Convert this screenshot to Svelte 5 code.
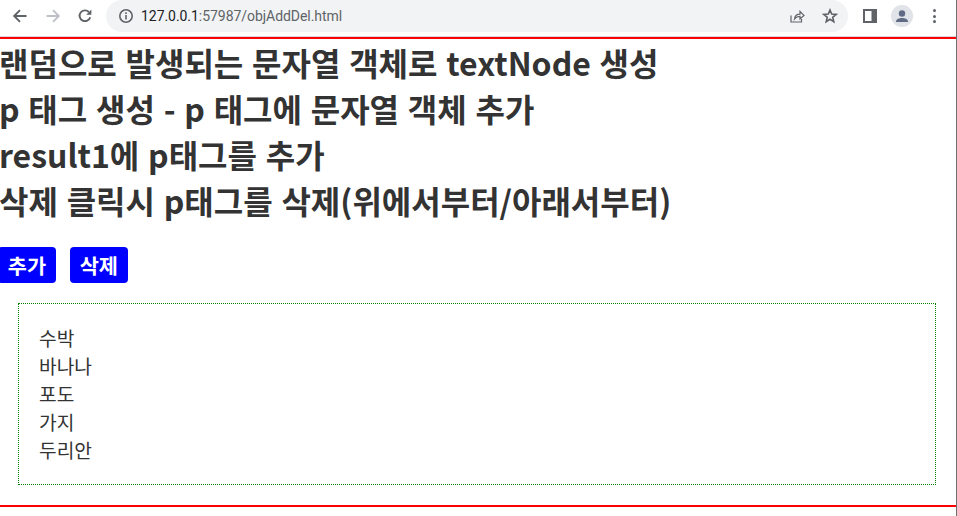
<script>
  const headings = [
    "랜덤으로 발생되는 문자열 객체로 textNode 생성",
    "p 태그 생성 - p 태그에 문자열 객체 추가",
    "result1에 p태그를 추가",
    "삭제 클릭시 p태그를 삭제(위에서부터/아래서부터)",
  ];
  const fruits = ["수박", "바나나", "포도", "가지", "두리안"];
</script>

<div class="window">
  <header class="toolbar">
    <svg class="nav first" viewBox="0 0 16 16" width="16" height="16">
      <path d="M14.5 8H2.5M8 2.2 2.2 8 8 13.8" fill="none" stroke="#5f6368" stroke-width="1.9" />
    </svg>
    <svg class="nav tight" viewBox="0 0 16 16" width="16" height="16">
      <path d="M1.5 8h12M8 2.2 13.8 8 8 13.8" fill="none" stroke="#bdc1c6" stroke-width="1.9" />
    </svg>
    <svg class="nav" viewBox="0 0 16 16" width="16" height="16">
      <path d="M13.2 9.2A5.4 5.4 0 1 1 11.9 4" fill="none" stroke="#5f6368" stroke-width="1.9" />
      <path d="M14.4 1.6v5.2H9.2z" fill="#5f6368" />
    </svg>

    <div class="omnibox">
      <svg viewBox="0 0 16 16" width="16" height="16" class="info">
        <circle cx="8" cy="8" r="6.2" fill="none" stroke="#5f6368" stroke-width="1.6" />
        <path d="M7.2 7h1.6v4.6H7.2zM7.2 4.3h1.6v1.6H7.2z" fill="#5f6368" />
      </svg>
      <span class="url"><span class="host">127.0.0.1</span>:57987/objAddDel.html</span>
      <span class="spacer"></span>
      <svg viewBox="0 0 16 16" width="16" height="16" class="share">
        <path d="M2 7.5V14h10.5V11M5.5 11c.4-3 2.500-4.800 5.500-4.800V3.500L15 7.400l-4 3.600V8.400c-2.200 0-4 .6-5.500 2.600z" fill="none" stroke="#5f6368" stroke-width="1.200" />
      </svg>
      <svg viewBox="0 0 16 16" width="16" height="16" class="star">
        <path d="M8 2l1.700 4.100 4.500.3-3.500 2.900 1.100 4.400L8 11.300l-3.800 2.400 1.100-4.400-3.500-2.900 4.500-.3z" fill="none" stroke="#5f6368" stroke-width="1.600" />
      </svg>
    </div>

    <svg class="panel" viewBox="0 0 14 14" width="14" height="14">
      <path fill-rule="evenodd" d="M0 0h14v14H0zM2 2v10h6.500V2z" fill="#5f6368" />
    </svg>
    <span class="avatar">
      <svg viewBox="0 0 22 22" width="22" height="22">
        <circle cx="11" cy="8.500" r="3.200" fill="#5f6b85" />
        <path d="M5 16.500c0-2.500 3.500-3.600 6-3.600s6 1.100 6 3.600v.5H5z" fill="#5f6b85" />
      </svg>
    </span>
    <span class="dots"><i></i><i></i><i></i></span>
  </header>

  <main class="page">
    {#each headings as line}
      <h1>{line}</h1>
    {/each}

    <div class="buttons">
      <button type="button" class="add">추가</button>
      <button type="button">삭제</button>
    </div>

    <div class="result">
      {#each fruits as fruit}
        <p>{fruit}</p>
      {/each}
    </div>
  </main>
</div>

<style>
  :global(body) {
    margin: 0;
    background: #fff;
  }

  .window {
    width: 957px;
    height: 516px;
    overflow: hidden;
    box-sizing: border-box;
    border-right: 1px solid #6e6e6e;
    font-family: "Noto Sans CJK KR", "Noto Sans", sans-serif;
  }

  .toolbar {
    display: flex;
    align-items: center;
    height: 32px;
    padding-bottom: 4px;
    border-bottom: 1px solid #d5d7da;
    box-sizing: content-box;
  }

  .nav {
    margin-right: 17px;
  }

  .nav.first {
    margin-left: 12px;
  }

  .nav.tight {
    margin-right: 16px;
  }

  .omnibox {
    display: flex;
    align-items: center;
    width: 742px;
    height: 32px;
    margin-left: -4px;
    padding-left: 12px;
    box-sizing: border-box;
    background: #f1f3f4;
    border-radius: 16px;
  }

  .info {
    margin-right: 7px;
  }

  .url {
    font: 14px "Roboto", "Liberation Sans", sans-serif;
    color: #5f6368;
    letter-spacing: -0.05px;
  }

  .host {
    color: #202124;
  }

  .spacer {
    flex: 1;
  }

  .share {
    margin-right: 17px;
  }

  .star {
    margin-right: 10px;
  }

  .panel {
    margin-left: 15px;
  }

  .avatar {
    display: flex;
    width: 22px;
    height: 22px;
    margin-left: 14px;
    border-radius: 50%;
    background: #e0e3e8;
  }

  .dots {
    display: flex;
    flex-direction: column;
    gap: 2.500px;
    margin-left: 20px;
  }

  .dots i {
    width: 3px;
    height: 3px;
    border-radius: 50%;
    background: #5f6368;
  }

  .page {
    border-top: 2px solid #f00;
    border-bottom: 2px solid #f00;
    padding-bottom: 20px;
  }

  h1 {
    margin: 0 0 0 -1px;
    font-size: 32px;
    line-height: 46px;
    font-weight: 700;
    word-spacing: 1.500px;
    color: #333;
    white-space: nowrap;
  }

  .buttons {
    display: flex;
    gap: 14px;
    margin-top: 24px;
  }

  button {
    height: 36px;
    padding: 0 9.800px;
    border: 0;
    border-radius: 4px;
    background: #00f;
    color: #fff;
    font: 700 20.800px "Noto Sans CJK KR", sans-serif;
  }

  .add {
    margin-left: -2px;
  }

  .result {
    margin: 20px 20px 0 18px;
    padding: 20px;
    border: 1px dotted #008000;
  }

  p {
    margin: 0;
    font-size: 19.200px;
    line-height: 28px;
    color: #333;
  }
</style>
